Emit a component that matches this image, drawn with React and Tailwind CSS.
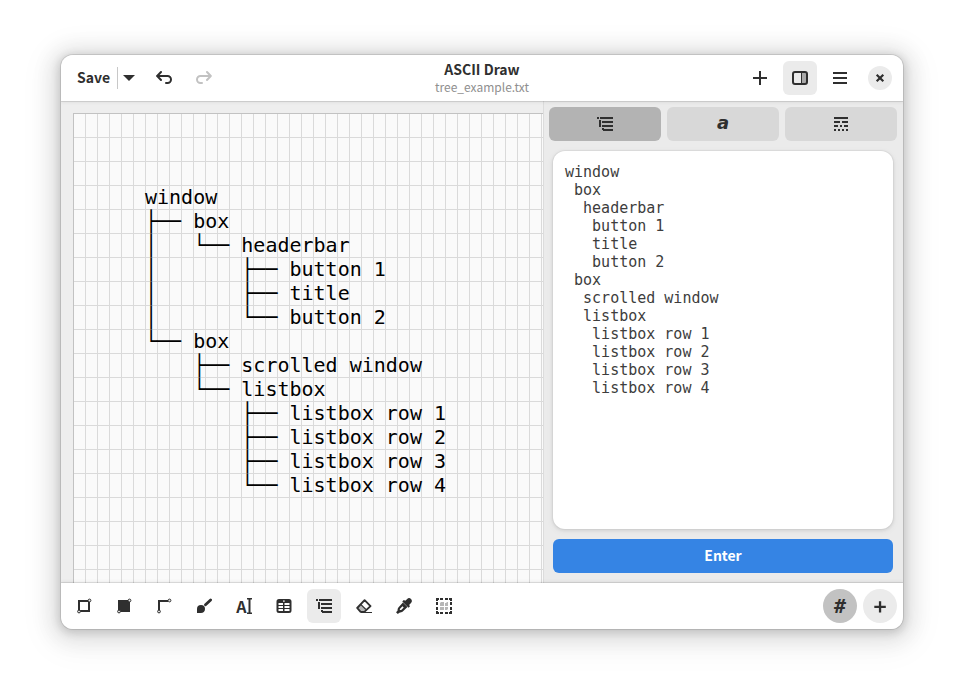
import React, { useState } from "react";

const TREE_DRAWING = `window
├── box
│   └── headerbar
│       ├── button 1
│       ├── title
│       └── button 2
└── box
    ├── scrolled window
    └── listbox
        ├── listbox row 1
        ├── listbox row 2
        ├── listbox row 3
        └── listbox row 4`;

const TREE_SOURCE = `window
 box
  headerbar
   button 1
   title
   button 2
 box
  scrolled window
  listbox
   listbox row 1
   listbox row 2
   listbox row 3
   listbox row 4`;

function Icon({ children, className = "" }) {
  return (
    <svg width="16" height="16" viewBox="0 0 16 16" fill="currentColor" aria-hidden="true" className={"shrink-0 " + className}>
      {children}
    </svg>
  );
}

const Undo = () => (
  <Icon>
    <path d="M1.500 6h10a3.500 3.500 0 0 1 0 7H10" fill="none" stroke="currentColor" strokeWidth="2" strokeLinecap="round" />
    <path d="M5 2L1.200 6 5 10" fill="none" stroke="currentColor" strokeWidth="2" strokeLinecap="round" strokeLinejoin="round" />
  </Icon>
);

const Redo = () => (
  <Icon className="-scale-x-100">
    <path d="M1.500 6h10a3.500 3.500 0 0 1 0 7H10M5 2L1.200 6 5 10" fill="none" stroke="currentColor" strokeWidth="2" strokeLinecap="round" strokeLinejoin="round" />
  </Icon>
);

const Plus = () => (
  <Icon>
    <path d="M7 1h2v6h6v2H9v6H7V9H1V7h6z" />
  </Icon>
);

const SmallPlus = () => (
  <Icon>
    <path d="M6.900 3.300h2.300v4.500h4.600V10H9.200v4.400H6.900V10H2.300V7.800h4.600z" />
  </Icon>
);

const SidebarIcon = () => (
  <Icon>
    <rect x="10" y="2" width="5" height="12" opacity="0.35" />
    <rect x="9" y="2" width="1" height="12" />
    <rect x="1" y="2" width="14" height="12" rx="2" fill="none" stroke="currentColor" strokeWidth="2" />
  </Icon>
);

const Menu = () => (
  <Icon>
    <path d="M1 2h14v2H1zM1 7h14v2H1zM1 12h14v2H1z" />
  </Icon>
);

const Close = () => (
  <Icon>
    <path d="M4.700 4.700l6.600 6.600M11.300 4.700l-6.600 6.600" stroke="currentColor" strokeWidth="2.200" />
  </Icon>
);

const TreeIcon = () => (
  <Icon>
    <path d="M0 1h2v2H0zM3 1h13v2H3zM2 4h2v3H2zM5 5h11v2H5zM2 7h2v4H2zM5 9h11v2H5zM5 12h2v2H5zM6 13h10v2H6z" />
  </Icon>
);

const LinesIcon = () => (
  <Icon>
    <path d="M1 1h14v2H1zM1 5h6v2H1zM9 5h6v2H9zM1 9h4v2H1zM7 9h2v2H7zM11 9h4v2h-4zM1 13h2v2H1zM5 13h2v2H5zM9 13h2v2H9zM13 13h2v2h-2z" />
  </Icon>
);

const Handle = ({ cx, cy }) => <circle cx={cx} cy={cy} r="1.400" fill="#e6e6e6" stroke="currentColor" strokeWidth="1" />;

const RectIcon = () => (
  <Icon>
    <rect x="3" y="3" width="10" height="10" fill="none" stroke="currentColor" strokeWidth="2" />
    <Handle cx="13.500" cy="2.500" />
    <Handle cx="3" cy="13.500" />
  </Icon>
);

const FilledRectIcon = () => (
  <Icon>
    <rect x="2" y="2" width="12" height="12" />
    <Handle cx="13.500" cy="2.500" />
    <Handle cx="3" cy="13.500" />
  </Icon>
);

const LineIcon = () => (
  <Icon>
    <path d="M3 12V3h9" fill="none" stroke="currentColor" strokeWidth="2" />
    <Handle cx="13.500" cy="2.500" />
    <Handle cx="3" cy="13.500" />
  </Icon>
);

const BrushIcon = () => (
  <Icon>
    <path d="M14.600 1.900L9.500 6.800" stroke="currentColor" strokeWidth="2.800" strokeLinecap="round" />
    <path d="M5 7a4 4 0 0 1 4 4c0 2.500-1.800 4-4 4H1v-4a4 4 0 0 1 4-4z" />
  </Icon>
);

const TextIcon = () => (
  <span className="flex items-center" aria-hidden="true">
    <span className="font-['Noto_Sans_CJK_SC',sans-serif] text-base leading-4 font-bold">A</span>
    <svg width="5" height="16" viewBox="0 0 5 16" fill="currentColor">
      <path d="M0 0h5v1.500H3.500v13H5V16H0v-1.500h1.500v-13H0z" />
    </svg>
  </span>
);

const TableIcon = () => (
  <Icon>
    <path
      fillRule="evenodd"
      d="M3 1h10a2.500 2.500 0 0 1 2.500 2.500v9A2.500 2.500 0 0 1 13 15H3a2.500 2.500 0 0 1-2.500-2.500v-9A2.500 2.500 0 0 1 3 1zM2.500 5v2H7V5zM8.500 5v2h5V5zM2.500 8v2H7V8zM8.500 8v2h5V8zM2.500 11v2H7v-2zM8.500 11v2h5v-2zM7.300 2.300v1.700h1.200V2.300z"
    />
  </Icon>
);

const EraserIcon = () => (
  <Icon>
    <path d="M4.700 6.500L9.500 11.300 7 14H4.500L1 10.500z" opacity="0.35" />
    <path d="M8.600 2.200L14.500 8.100 8.300 13.900H4.600L1.200 10z" fill="none" stroke="currentColor" strokeWidth="1.900" strokeLinejoin="round" />
    <path d="M4.700 6.300L9.900 11.500" stroke="currentColor" strokeWidth="1.200" />
    <path d="M5 14h11v1H5z" />
  </Icon>
);

const PickerIcon = () => (
  <Icon>
    <path d="M15 1c1.200 1.200 1.200 2.800 0 4l-1.900 1.900.9 1.300-1.500 1.500L6.300 3.500 7.800 2l1.500.8 1.900-1.900C12.400-.3 13.900-.1 15 1z" />
    <path
      fillRule="evenodd"
      d="M6.900 4.500l4.600 4.600-4.700 4.500c-.9.900-2.200 1-3.400 1.100L1.800 16 0 14.300l1.500-1.600c.1-1.200.2-2.500 1.100-3.400zM6.500 8.200l-2.200 2.200c-.5.500-.6 1.200-.3 1.500s1 .3 1.500-.2l2.200-2.200z"
    />
  </Icon>
);

const SelectIcon = () => (
  <Icon>
    <path d="M0 0h3v2H2v1H0zM4 0h3v2H4zM9 0h3v2H9zM13 0h3v3h-2V2h-1zM0 4h2v3H0zM0 9h2v3H0zM14 4h2v3h-2zM14 9h2v3h-2zM0 13h2v1h1v2H0zM4 14h3v2H4zM9 14h3v2H9zM14 13h2v3h-3v-2h1z" />
    <path d="M5 4h3v4H4V5zM9 5h1l1-1h1v4H9zM4 9h4v3H4zM9 9h3v2l-1 1H9z" opacity="0.35" />
  </Icon>
);

const TOOLS = [
  ["Rectangle", RectIcon],
  ["Filled rectangle", FilledRectIcon],
  ["Line", LineIcon],
  ["Freehand", BrushIcon],
  ["Text", TextIcon],
  ["Table", TableIcon],
  ["Tree", TreeIcon],
  ["Eraser", EraserIcon],
  ["Picker", PickerIcon],
  ["Select", SelectIcon],
];

function IconButton({ label, active, disabled, children, onClick }) {
  return (
    <button
      type="button"
      aria-label={label}
      aria-pressed={active}
      disabled={disabled}
      onClick={onClick}
      className={
        "flex size-[34px] shrink-0 items-center justify-center rounded-md " +
        (active ? "bg-[#ebebeb] " : "") +
        (disabled ? "text-[#c2c2c2]" : "")
      }
    >
      {children}
    </button>
  );
}

function SidebarTab({ label, active, children }) {
  return (
    <button
      type="button"
      aria-label={label}
      aria-pressed={active}
      className={"flex h-[34px] flex-1 items-center justify-center rounded-md " + (active ? "bg-[#b3b3b3]" : "bg-[#d8d8d8]")}
    >
      {children}
    </button>
  );
}

export default function App() {
  const [tool, setTool] = useState("Tree");
  const [source, setSource] = useState(TREE_SOURCE);

  return (
    <div className="flex h-screen bg-white px-[61px] pt-[55px] pb-[67px] font-['Noto_Sans_CJK_SC',sans-serif] text-[#2f2f2f]">
      <div className="flex min-w-0 flex-1 flex-col overflow-hidden rounded-xl bg-[#ebebeb] shadow-[0_0_0_1px_rgba(0,0,0,0.1),0_2px_8px_2px_rgba(0,0,0,0.14),0_3px_20px_10px_rgba(0,0,0,0.09),0_6px_32px_16px_rgba(0,0,0,0.04)]">
        <header className="relative z-10 grid h-[46px] shrink-0 grid-cols-[1fr_auto_1fr] items-center bg-white px-1.5 shadow-[0_1px_0_rgba(0,0,0,0.1),0_2px_3px_rgba(0,0,0,0.05)]">
          <div className="flex items-center">
            <button type="button" className="h-[34px] pr-[7px] pb-0.5 pl-2.5 text-sm font-bold">
              Save
            </button>
            <span className="h-[22px] w-px bg-[#c8c8c8]" />
            <button type="button" aria-label="Save options" className="flex h-[34px] w-[22px] items-center justify-center">
              <svg width="12" height="6" viewBox="0 0 12 6" fill="currentColor" aria-hidden="true">
                <path d="M0 0h12L6 6z" />
              </svg>
            </button>
            <div className="ml-[7px] flex gap-1.5">
              <IconButton label="Undo">
                <Undo />
              </IconButton>
              <IconButton label="Redo" disabled>
                <Redo />
              </IconButton>
            </div>
          </div>
          <div className="text-center">
            <h1 className="text-sm leading-[18px] font-bold">ASCII Draw</h1>
            <p className="text-xs leading-[18px] text-[#8f8f8f]">tree_example.txt</p>
          </div>
          <div className="flex items-center justify-end gap-1.5">
            <IconButton label="New">
              <Plus />
            </IconButton>
            <IconButton label="Toggle sidebar" active>
              <SidebarIcon />
            </IconButton>
            <IconButton label="Main menu">
              <Menu />
            </IconButton>
            <IconButton label="Close">
              <span className="flex size-6 items-center justify-center rounded-full bg-[#ebebeb]">
                <Close />
              </span>
            </IconButton>
          </div>
        </header>

        <main className="flex min-h-0 flex-1">
          <section aria-label="Canvas" className="min-w-0 flex-1 overflow-hidden bg-[#eeeeee] pt-3 pl-3">
            <div className="h-full border-t border-l border-[#c2c2c2] bg-[#fafafa] bg-[linear-gradient(to_right,#dadada_1px,transparent_1px),linear-gradient(to_bottom,#dadada_1px,transparent_1px)] bg-[size:12px_24px] bg-origin-border pt-[71px] pl-[71px]">
              <pre className="font-['DejaVu_Sans_Mono',monospace] text-xl leading-6 text-black">{TREE_DRAWING}</pre>
            </div>
          </section>
          <aside className="flex w-[360px] shrink-0 flex-col border-l border-[#dcdcdc] bg-[#ebebeb]">
            <div className="flex gap-1.5 py-1.5 pr-1.5 pl-[5px]">
              <SidebarTab label="Tree" active>
                <TreeIcon />
              </SidebarTab>
              <SidebarTab label="Characters">
                <span className="pb-0.5 font-['DejaVu_Sans',sans-serif] text-lg leading-4 font-bold italic">a</span>
              </SidebarTab>
              <SidebarTab label="Line styles">
                <LinesIcon />
              </SidebarTab>
            </div>
            <div className="flex min-h-0 flex-1 flex-col gap-2.5 px-2.5 pt-1 pb-2.5 pl-[9px]">
              <textarea
                aria-label="Tree source"
                value={source}
                onChange={(e) => setSource(e.target.value)}
                spellCheck={false}
                className="min-h-0 flex-1 resize-none rounded-xl bg-white p-3 font-['DejaVu_Sans_Mono',monospace] text-[15px] leading-[18px] text-[#3d3d3d] shadow-[0_0_0_1px_rgba(0,0,0,0.03),0_1px_3px_1px_rgba(0,0,0,0.07),0_2px_6px_2px_rgba(0,0,0,0.03)] outline-none"
              />
              <button type="button" className="h-[34px] shrink-0 rounded-md bg-[#3584e4] pb-0.5 text-sm font-bold text-white">
                Enter
              </button>
            </div>
          </aside>
        </main>

        <footer className="relative z-10 flex h-[46px] shrink-0 items-center justify-between bg-white px-1.5 shadow-[0_-1px_0_rgba(0,0,0,0.1),0_-2px_3px_rgba(0,0,0,0.05)]">
          <div className="flex gap-1.5">
            {TOOLS.map(([name, Glyph]) => (
              <IconButton key={name} label={name} active={tool === name} onClick={() => setTool(name)}>
                <Glyph />
              </IconButton>
            ))}
          </div>
          <div className="flex gap-1.5">
            <button type="button" aria-label="Current character" className="flex size-[34px] items-center justify-center rounded-full bg-[#c2c2c2] font-['DejaVu_Sans_Mono',monospace] text-xl leading-none font-bold">
              #
            </button>
            <button type="button" aria-label="Add character" className="flex size-[34px] items-center justify-center rounded-full bg-[#ebebeb]">
              <SmallPlus />
            </button>
          </div>
        </footer>
      </div>
    </div>
  );
}
